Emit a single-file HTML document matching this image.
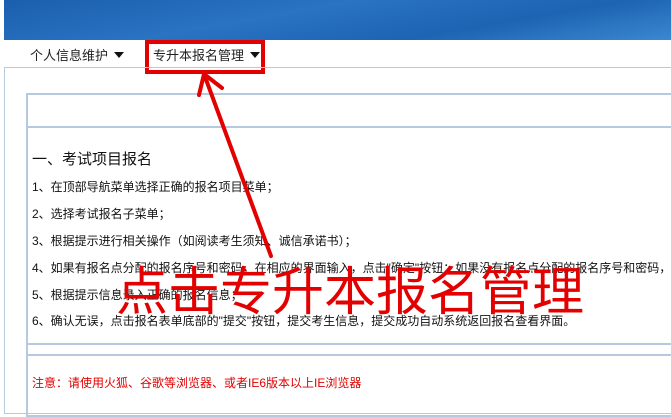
<!DOCTYPE html>
<html><head><meta charset="utf-8"><style>
body{margin:0;width:671px;height:406px;overflow:hidden;background:#fff;font-family:"Liberation Sans","Noto Sans CJK SC",sans-serif;position:relative}
.hd{position:absolute;left:4px;top:0;width:667px;height:40px;background:linear-gradient(170deg,#1a5fae 0%,#2a73c2 40%,#1d64b3 70%,#3b87d0 100%)}
.nav{position:absolute;top:45px;font-size:13px;color:#222}
.tri{display:inline-block;width:0;height:0;border-left:5px solid transparent;border-right:5px solid transparent;border-top:6px solid #111;margin-left:6px;vertical-align:2px}
.box{position:absolute;left:4px;top:67px;width:680px;height:345px;border:1px solid #b7c9de}
.inner{position:absolute;left:26px;top:93px;width:660px;height:320px;border:2px solid #b7c9de;border-right:none}
.l{position:absolute;left:32px;font-size:12px;color:#111;white-space:nowrap}
.hl{position:absolute;left:28px;width:650px;height:2px;background:#b7c9de}
</style></head><body>
<div class="hd"></div>
<div class="nav" style="left:30px">个人信息维护<span class="tri"></span></div>
<div class="nav" style="left:153px">专升本报名管理<span class="tri"></span></div>
<div style="position:absolute;left:145px;top:40px;width:112px;height:26px;border:4px solid #e30000"></div>
<div class="box"></div>
<div class="inner"></div>
<div class="hl" style="top:126px"></div>
<div class="hl" style="top:343px"></div>
<div class="hl" style="top:354px"></div>
<div class="l" style="top:148px;font-size:15px">一、考试项目报名</div>
<div class="l" style="top:178px">1、在顶部导航菜单选择正确的报名项目菜单；</div>
<div class="l" style="top:205px">2、选择考试报名子菜单；</div>
<div class="l" style="top:232px">3、根据提示进行相关操作（如阅读考生须知、诚信承诺书）；</div>
<div class="l" style="top:259px">4、如果有报名点分配的报名序号和密码，在相应的界面输入，点击"确定"按钮；如果没有报名点分配的报名序号和密码，</div>
<div class="l" style="top:286px">5、根据提示信息录入正确的报名信息；</div>
<div class="l" style="top:312px">6、确认无误，点击报名表单底部的"提交"按钮，提交考生信息，提交成功自动系统返回报名查看界面。</div>
<div class="l" style="top:374px;color:#e00000">注意：请使用火狐、谷歌等浏览器、或者IE6版本以上IE浏览器</div>
<svg style="position:absolute;left:0;top:0" width="671" height="406"><g stroke="#e30000" stroke-width="4" fill="none" stroke-linecap="round"><line x1="204" y1="74" x2="271" y2="256"/><line x1="204" y1="74" x2="199" y2="95"/><line x1="204" y1="74" x2="222" y2="88"/></g></svg>
<div style="position:absolute;left:116px;top:262px;font-size:52px;color:#e30000;font-family:'Noto Sans CJK SC',sans-serif;font-weight:400;line-height:1;white-space:nowrap">点击专升本报名管理</div>
</body></html>
